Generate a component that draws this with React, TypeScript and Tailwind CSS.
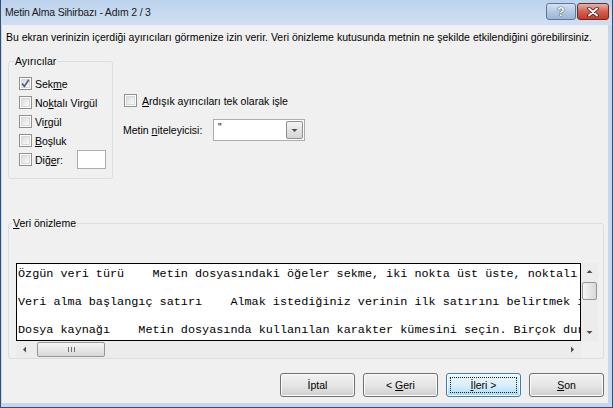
import React from "react";

const CheckBox = ({ checked = false }: { checked?: boolean }) => (
  <span className="relative inline-block w-[13px] h-[13px] shrink-0 border border-[#8e8f8f] bg-white">
    <span className="absolute inset-[1px] border border-[#d8d8d8] bg-gradient-to-br from-[#dcdcdc] to-[#fafafa]" />
    {checked && (
      <svg className="absolute left-0 top-0" width="11" height="11" viewBox="0 0 11 11">
        <path d="M2.2 5.6 L4.4 8.4 L8.8 1.8" stroke="#4a5f97" strokeWidth="1.7" fill="none" />
      </svg>
    )}
  </span>
);

const Arrow = ({ dir }: { dir: "up" | "down" | "left" | "right" }) => {
  const d = {
    up: "M0.5 4 L3.5 1 L6.5 4 Z",
    down: "M0.5 1 L3.5 4 L6.5 1 Z",
    left: "M4 0.5 L1 3.5 L4 6.5 Z",
    right: "M1 0.5 L4 3.5 L1 6.5 Z",
  }[dir];
  const vertical = dir === "up" || dir === "down";
  return (
    <svg width={vertical ? 7 : 5} height={vertical ? 5 : 7} viewBox={vertical ? "0 0 7 5" : "0 0 5 7"}>
      <path d={d} fill="#4d4d4d" />
    </svg>
  );
};

const WinButton = ({ children, focused = false }: { children: React.ReactNode; focused?: boolean }) => (
  <button
    className={`relative w-[75px] h-[24px] rounded-[3px] border text-[10.5px] leading-[12px] text-black shadow-[inset_0_0_0_1px_#fcfcfc] ${
      focused
        ? "border-[#3c7fb1] bg-gradient-to-b from-[#eaf6fd] via-[#d9f0fc] to-[#a9dbf6]"
        : "border-[#707070] bg-gradient-to-b from-[#f2f2f2] via-[#e6e6e6] to-[#cfcfcf]"
    }`}
  >
    {focused && <span className="absolute inset-[3px] border border-dotted border-[#222]" />}
    <span className="relative">{children}</span>
  </button>
);

const lines = [
  "Özgün veri türü    Metin dosyasındaki öğeler sekme, iki nokta üst üste, noktalı virgül, boşluk veya başka karakterlerle ayrılmışsa",
  "",
  "Veri alma başlangıç satırı    Almak istediğiniz verinin ilk satırını belirtmek için satır numarasını yazın veya seçin.",
  "",
  "Dosya kaynağı    Metin dosyasında kullanılan karakter kümesini seçin. Birçok durumda bu ayarı varsayılan olarak bırakabilirsiniz.",
];

export default function App() {
  return (
    <div className="w-[613px] h-[408px] flex flex-col overflow-hidden bg-[#c4d7ee] border-l border-r border-b border-[#34506f] font-['Liberation_Sans',Arial,sans-serif] text-black">
      {/* Title bar */}
      <div className="h-[25px] shrink-0 flex items-start bg-gradient-to-b from-[#bcd2ec] to-[#d0e0f3]">
        <span className="mt-[5px] ml-[4px] text-[10.5px] tracking-[-0.2px] leading-[14px] text-[#1a1a1a]">
          Metin Alma Sihirbazı - Adım 2 / 3
        </span>
        <div className="ml-auto mt-[3px] mr-[3px] flex gap-[1px]">
          <div className="w-[30px] h-[17px] rounded-[3px] border border-[#5f7899] bg-gradient-to-b from-[#d3e1f1] via-[#b4c9e2] to-[#9db6d4] flex items-center justify-center text-[12px] font-bold leading-none text-white [text-shadow:0_0_1px_#1d3150,0_0_1px_#1d3150]">
            ?
          </div>
          <div className="w-[32px] h-[17px] rounded-[3px] border border-[#6b2a24] bg-gradient-to-b from-[#eab0a2] via-[#d4604d] to-[#c33b2a] flex items-center justify-center">
            <svg width="12" height="10" viewBox="0 0 12 10">
              <path d="M2 1.5 L10 8.5 M10 1.5 L2 8.5" stroke="#3b1a17" strokeWidth="3.6" strokeLinecap="round" />
              <path d="M2 1.5 L10 8.5 M10 1.5 L2 8.5" stroke="#ffffff" strokeWidth="2" strokeLinecap="round" />
            </svg>
          </div>
        </div>
      </div>

      {/* Client area */}
      <div className="flex-1 ml-[1px] mr-[4px] mb-[4px] bg-[#f0f0f0] flex flex-col text-[10.5px] leading-[12px]">
        <p className="pt-[6px] pl-[4px] whitespace-nowrap">
          Bu ekran verinizin içerdiği ayırıcıları görmenize izin verir. Veri önizleme kutusunda metnin ne şekilde etkilendiğini görebilirsiniz.
        </p>

        <div className="flex items-start mt-[18px]">
          {/* Ayırıcılar */}
          <div className="relative ml-[6px] w-[105px] border border-[#d5dfe5] rounded-[3px] pt-[12px] pb-[9px] pl-[10px]">
            <span className="absolute -top-[7px] left-[5px] px-[1px] bg-[#f0f0f0]">Ayırıcılar</span>
            <div className="flex flex-col">
              <label className="h-[19px] flex items-center gap-[3px]">
                <CheckBox checked />
                <span>Sek<u>m</u>e</span>
              </label>
              <label className="h-[19px] flex items-center gap-[3px]">
                <CheckBox />
                <span>No<u>k</u>talı Virgül</span>
              </label>
              <label className="h-[19px] flex items-center gap-[3px]">
                <CheckBox />
                <span>Vi<u>r</u>gül</span>
              </label>
              <label className="h-[19px] flex items-center gap-[3px]">
                <CheckBox />
                <span><u>B</u>oşluk</span>
              </label>
              <label className="h-[19px] flex items-center gap-[3px]">
                <CheckBox />
                <span className="w-[39px]">Diğ<u>e</u>r:</span>
                <span className="w-[29px] h-[19px] border border-[#abadb3] bg-white" />
              </label>
            </div>
          </div>

          {/* Right options */}
          <div className="ml-[11px] mt-[33px] flex flex-col">
            <label className="h-[13px] flex items-center gap-[5px]">
              <CheckBox />
              <span><u>A</u>rdışık ayırıcıları tek olarak işle</span>
            </label>
            <div className="mt-[12px] -ml-[1px] flex items-center">
              <span className="w-[90px]">Metin <u>n</u>iteleyicisi:</span>
              <div className="w-[92px] h-[22px] border border-[#abadb3] bg-white flex items-stretch">
                <span className="flex-1 pl-[4px] pt-[2px] text-[10px]">"</span>
                <span className="w-[17px] m-[1px] rounded-[2px] border border-[#8f8f8f] bg-gradient-to-b from-[#f4f4f4] to-[#d4d4d4] flex items-center justify-center">
                  <Arrow dir="down" />
                </span>
              </div>
            </div>
          </div>
        </div>

        {/* Veri önizleme */}
        <div className="relative mt-[44px] ml-[6px] w-[596px] border border-[#d5dfe5] rounded-[3px] pt-[39px] pl-[7px]">
          <span className="absolute -top-[7px] left-[3px] px-[1px] bg-[#f0f0f0]">
            <u>V</u>eri önizleme
          </span>
          <div className="flex">
            <div className="w-[565px] h-[78px] border border-black bg-white overflow-hidden pt-[3px] pl-[1px] font-['Liberation_Mono','Courier_New',monospace] text-[11.8px] leading-[14px]">
              {lines.map((l, i) => (
                <div key={i} className="h-[14px] whitespace-pre">{l}</div>
              ))}
            </div>
            {/* vertical scrollbar */}
            <div className="w-[17px] h-[78px] bg-[#ececec] flex flex-col">
              <div className="h-[17px] flex items-center justify-center"><Arrow dir="up" /></div>
              <div className="flex-1 px-[1px] pt-[2px]">
                <div className="h-[18px] rounded-[2px] border border-[#979797] bg-gradient-to-r from-[#f6f6f6] to-[#d8d8d8]" />
              </div>
              <div className="h-[17px] flex items-center justify-center"><Arrow dir="down" /></div>
            </div>
          </div>
          {/* horizontal scrollbar */}
          <div className="w-[565px] h-[17px] bg-[#ececec] flex items-center">
            <div className="w-[17px] h-[17px] flex items-center justify-center"><Arrow dir="left" /></div>
            <div className="flex-1 h-full py-[1px] pl-[4px]">
              <div className="w-[68px] h-full rounded-[2px] border border-[#979797] bg-gradient-to-b from-[#f6f6f6] to-[#d8d8d8] flex items-center justify-center gap-[2px]">
                <span className="w-[1px] h-[5px] bg-[#6f6f6f]" />
                <span className="w-[1px] h-[5px] bg-[#6f6f6f]" />
                <span className="w-[1px] h-[5px] bg-[#6f6f6f]" />
              </div>
            </div>
            <div className="w-[17px] h-[17px] flex items-center justify-center"><Arrow dir="right" /></div>
          </div>
        </div>

        {/* Buttons */}
        <div className="mt-[14px] mr-[4px] flex justify-end gap-[8px]">
          <WinButton>İptal</WinButton>
          <WinButton>&lt; <u>G</u>eri</WinButton>
          <WinButton focused><u>İ</u>leri &gt;</WinButton>
          <WinButton><u>S</u>on</WinButton>
        </div>
      </div>
    </div>
  );
}
